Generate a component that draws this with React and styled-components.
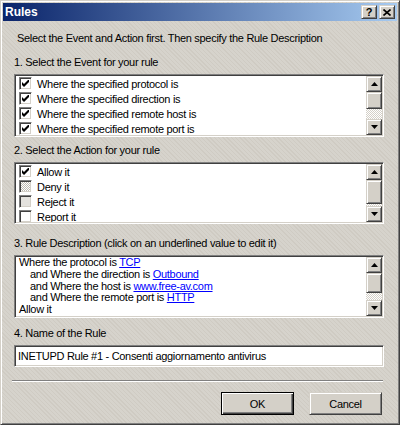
import React from "react";
import styled, { createGlobalStyle } from "styled-components";

const GlobalStyle = createGlobalStyle`
  html, body {
    margin: 0;
    padding: 0;
    background: #d4d0c8;
  }
  * {
    box-sizing: border-box;
  }
`;

const face = "#d4d0c8";

const raised = `
  border: 1px solid;
  border-color: ${face} #404040 #404040 ${face};
  box-shadow: inset 1px 1px #ffffff, inset -1px -1px #808080;
  background-color: ${face};
`;

const sunken = `
  border: 1px solid;
  border-color: #808080 #ffffff #ffffff #808080;
  box-shadow: inset 1px 1px #404040, inset -1px -1px ${face};
`;

const Window = styled.div`
  width: 400px;
  height: 425px;
  padding: 2px;
  ${raised}
  background-image: repeating-linear-gradient(
    45deg,
    #d6d3cc 0 2px,
    #cfcbc3 2px 3px
  );
  font-family: "Liberation Sans", Arial, sans-serif;
  font-size: 11px;
  letter-spacing: -0.3px;
  color: #000;
  display: flex;
  flex-direction: column;
`;

const TitleBar = styled.div`
  height: 18px;
  display: flex;
  align-items: center;
  padding: 0 2px;
  background: linear-gradient(to right, #0a246a, #a6caf0);
`;

const TitleText = styled.div`
  flex: 1;
  color: #fff;
  font-weight: bold;
  font-size: 12px;
  letter-spacing: 0;
`;

const CaptionButton = styled.div`
  width: 16px;
  height: 14px;
  ${raised}
  display: flex;
  align-items: center;
  justify-content: center;
  margin-left: ${(p) => (p.$gap ? "2px" : "0")};
  font-weight: bold;
  font-size: 11px;
  line-height: 1;
  padding-top: 1px;
`;

const Content = styled.div`
  display: flex;
  flex-direction: column;
  padding: 0 13px 0 11px;
`;

const Intro = styled.div`
  margin-top: 11px;
  padding-left: 3px;
  line-height: 13px;
`;

const Label = styled.div`
  margin-top: ${(p) => p.$top}px;
  line-height: 13px;
  margin-bottom: 5px;
`;

const ListBox = styled.div`
  height: ${(p) => p.$height}px;
  ${sunken}
  background: #fff;
  padding: 1px;
  display: flex;
`;

const Items = styled.div`
  flex: 1;
  overflow: hidden;
`;

const Row = styled.div`
  height: 15px;
  display: flex;
  align-items: center;
  padding-left: 3px;
  white-space: nowrap;
`;

const Box = styled.div`
  width: 13px;
  height: 13px;
  margin-right: 5px;
  ${sunken}
  display: flex;
  align-items: center;
  justify-content: center;
  background: ${(p) =>
    p.$state === "mixed"
      ? `repeating-conic-gradient(#bdb9b1 0 25%, #ffffff 0 50%) 0 0 / 2px 2px`
      : p.$state === "grey"
      ? "#e4e2de"
      : "#ffffff"};
`;

const Line = styled.div`
  height: 11.8px;
  line-height: 11.8px;
  padding-left: ${(p) => (p.$indent ? 14 : 3)}px;
  white-space: nowrap;
`;

const Link = styled.span`
  color: #0000ff;
  text-decoration: underline;
`;

const ScrollBar = styled.div`
  width: 16px;
  display: flex;
  flex-direction: column;
`;

const ArrowButton = styled.div`
  width: 16px;
  height: 16px;
  flex: none;
  ${raised}
  display: flex;
  align-items: center;
  justify-content: center;
`;

const Thumb = styled.div`
  width: 16px;
  height: ${(p) => p.$size}px;
  flex: none;
  ${raised}
`;

const Track = styled.div`
  flex: 1;
  background: repeating-conic-gradient(${face} 0 25%, #ffffff 0 50%) 0 0 / 2px 2px;
`;

const TextField = styled.div`
  height: 22px;
  ${sunken}
  background: #fff;
  padding: 0 3px;
  display: flex;
  align-items: center;
  white-space: nowrap;
`;

const Separator = styled.div`
  margin-top: 13px;
  margin-left: -2px;
  margin-right: 1px;
  height: 2px;
  border-top: 1px solid #808080;
  border-bottom: 1px solid #ffffff;
`;

const ButtonRow = styled.div`
  margin-top: 10px;
  display: flex;
  justify-content: flex-end;
  gap: 15px;
  padding-right: 2px;
`;

const Button = styled.div`
  width: 73px;
  height: 23px;
  display: flex;
  align-items: center;
  justify-content: center;
  ${raised}
  ${(p) =>
    p.$default &&
    `
    border: 1px solid #000;
    box-shadow: inset 1px 1px #ffffff, inset -1px -1px #404040, inset -2px -2px #808080;
  `}
`;

const Arrow = ({ up }) => (
  <svg width="7" height="4" viewBox="0 0 7 4">
    <polygon points={up ? "3.5,0 7,4 0,4" : "0,0 7,0 3.5,4"} fill="#000" />
  </svg>
);

const Check = () => (
  <svg width="7" height="7" viewBox="0 0 7 7">
    <polygon points="0,2 2,4 6,0 7,0 7,2 2,7 0,5" fill="#000" />
  </svg>
);

const Scroller = ({ thumb }) => (
  <ScrollBar>
    <ArrowButton>
      <Arrow up />
    </ArrowButton>
    <Thumb $size={thumb} />
    <Track />
    <ArrowButton>
      <Arrow />
    </ArrowButton>
  </ScrollBar>
);

const events = [
  "Where the specified protocol is",
  "Where the specified direction is",
  "Where the specified remote host is",
  "Where the specified remote port is",
];

const actions = [
  { text: "Allow it", state: "checked" },
  { text: "Deny it", state: "mixed" },
  { text: "Reject it", state: "grey" },
  { text: "Report it", state: "empty" },
];

export default function App() {
  return (
    <>
      <GlobalStyle />
      <Window>
        <TitleBar>
          <TitleText>Rules</TitleText>
          <CaptionButton>?</CaptionButton>
          <CaptionButton $gap>
            <svg width="8" height="7" viewBox="0 0 8 7">
              <path d="M0.5 0.5 L7.5 6.5 M7.5 0.5 L0.5 6.5" stroke="#000" strokeWidth="1.6" />
            </svg>
          </CaptionButton>
        </TitleBar>
        <Content>
          <Intro>Select the Event and Action first. Then specify the Rule Description</Intro>

          <Label $top={11}>1. Select the Event for your rule</Label>
          <ListBox $height={63}>
            <Items>
              {events.map((e) => (
                <Row key={e}>
                  <Box>
                    <Check />
                  </Box>
                  {e}
                </Row>
              ))}
            </Items>
            <Scroller thumb={17} />
          </ListBox>

          <Label $top={7}>2. Select the Action for your rule</Label>
          <ListBox $height={62}>
            <Items>
              {actions.map((a) => (
                <Row key={a.text}>
                  <Box $state={a.state}>{a.state === "checked" && <Check />}</Box>
                  {a.text}
                </Row>
              ))}
            </Items>
            <Scroller thumb={24} />
          </ListBox>

          <Label $top={13}>3. Rule Description (click on an underlined value to edit it)</Label>
          <ListBox $height={63}>
            <Items>
              <Line>
                Where the protocol is <Link>TCP</Link>
              </Line>
              <Line $indent>
                and Where the direction is <Link>Outbound</Link>
              </Line>
              <Line $indent>
                and Where the host is <Link>www.free-av.com</Link>
              </Line>
              <Line $indent>
                and Where the remote port is <Link>HTTP</Link>
              </Line>
              <Line>Allow it</Line>
            </Items>
            <Scroller thumb={20} />
          </ListBox>

          <Label $top={9}>4. Name of the Rule</Label>
          <TextField>INETUPD Rule #1 - Consenti aggiornamento antivirus</TextField>

          <Separator />

          <ButtonRow>
            <Button $default>OK</Button>
            <Button>Cancel</Button>
          </ButtonRow>
        </Content>
      </Window>
    </>
  );
}
